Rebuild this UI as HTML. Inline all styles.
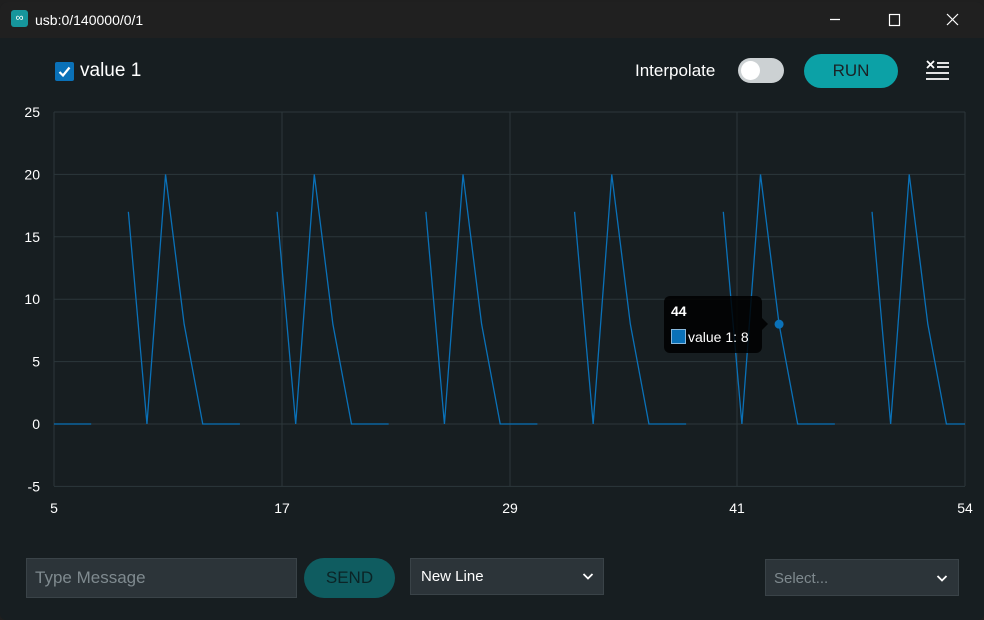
<!DOCTYPE html>
<html><head><meta charset="utf-8"><style>
*{margin:0;padding:0;box-sizing:border-box}
body{width:984px;height:620px;background:#1f1f1f;font-family:"Liberation Sans",sans-serif;overflow:hidden;position:relative}
.win{position:absolute;left:0;top:2px;width:984px;height:618px;background:#171e21;border-radius:8px 8px 6px 6px;overflow:hidden}
.title{height:36px;background:#202020;color:#fff;font-size:14px;position:relative}
.title .ic{position:absolute;left:11px;top:8px;width:17px;height:17px;background:#16969c;border-radius:3px;color:#fff;font-size:11px;text-align:center;line-height:16px}
.title .t{position:absolute;left:35px;top:10px}
.abs{position:absolute}
</style></head><body>
<div class="win">
<div class="title"><div class="ic">∞</div><div class="t">usb:0/140000/0/1</div>
<svg class="abs" style="left:820px;top:0" width="164" height="36" fill="none" stroke="#fff" stroke-width="1.2">
<line x1="10" y1="17.5" x2="20" y2="17.5"/><rect x="69.5" y="12.5" width="10" height="11"/>
<line x1="127" y1="12" x2="138" y2="23"/><line x1="138" y1="12" x2="127" y2="23"/></svg>
</div>
<div class="abs" style="left:55px;top:60px;width:19px;height:19px;background:#0a71b8;border-radius:2px"></div>
<svg class="abs" style="left:55px;top:60px" width="19" height="19"><path d="M4.5 10 L8 13.5 L14.5 5.5" stroke="#fff" stroke-width="2.2" fill="none"/></svg>
<div class="abs" style="left:80px;top:58px;color:#fff;font-size:19px">value 1</div>
<div class="abs" style="left:635px;top:59px;color:#fff;font-size:17px">Interpolate</div>
<div class="abs" style="left:738px;top:56px;width:46px;height:25px;border-radius:13px;background:#ccd1d3"></div>
<div class="abs" style="left:741px;top:59px;width:19px;height:19px;border-radius:50%;background:#fff"></div>
<div class="abs" style="left:804px;top:52px;width:94px;height:34px;border-radius:17px;background:#0ca1a6;color:#1a2226;font-size:17px;text-align:center;line-height:34px">RUN</div>
<svg class="abs" style="left:924px;top:57px" width="28" height="24" stroke="#fff" stroke-width="1.8" fill="none">
<line x1="3" y1="2" x2="10" y2="9"/><line x1="10" y1="2" x2="3" y2="9"/><line x1="13" y1="4" x2="25" y2="4"/><line x1="13" y1="8" x2="25" y2="8"/><line x1="2" y1="14" x2="25" y2="14"/><line x1="2" y1="20" x2="25" y2="20"/></svg>
<svg id="ch" class="abs" style="left:0;top:-2px" width="984" height="540" font-family="Liberation Sans" font-size="14" fill="#fff"></svg>
<div class="abs" style="left:26px;top:556px;width:271px;height:40px;background:#2c3439;border:1px solid #3a4348;color:#7f8a8f;font-size:17px;line-height:38px;padding-left:8px">Type Message</div>
<div class="abs" style="left:304px;top:556px;width:91px;height:40px;border-radius:20px;background:#0f5c60;color:#0b2426;font-size:17px;text-align:center;line-height:40px">SEND</div>
<div class="abs" style="left:410px;top:556px;width:194px;height:37px;background:#2c3439;border:1px solid #3a4348;color:#fff;font-size:15px;line-height:35px;padding-left:10px">New Line</div>
<svg class="abs" style="left:582px;top:570px" width="12" height="10"><path d="M1.5 2 L6 6.5 L10.5 2" stroke="#fff" stroke-width="1.8" fill="none"/></svg>
<div class="abs" style="left:765px;top:557px;width:194px;height:37px;background:#2c3439;border:1px solid #3a4348;color:#7f8a8f;font-size:15px;line-height:37px;padding-left:8px">Select...</div>
<svg class="abs" style="left:936px;top:572px" width="12" height="10"><path d="M1.5 2 L6 6.5 L10.5 2" stroke="#fff" stroke-width="1.8" fill="none"/></svg>
</div>
<script>
var s='',X=u=>54+(u-5)*18.592,Y=v=>424-v*12.48;
[25,20,15,10,5,0,-5].forEach(v=>{s+=`<line x1="54" x2="965" y1="${Y(v)}" y2="${Y(v)}" stroke="#2c373b"/><text x="40" y="${Y(v)+5}" text-anchor="end">${v}</text>`});
[[5,54],[17,282],[29,510],[41,737],[54,965]].forEach(a=>{s+=`<line y1="112" y2="486" x1="${a[1]}" x2="${a[1]}" stroke="#2c373b"/><text x="${a[1]}" y="513" text-anchor="middle">${a[0]}</text>`});
s+=`<polyline fill="none" stroke="#0a71b8" stroke-width="1.3" points="${X(5)},${Y(0)} ${X(7)},${Y(0)}"/>`;
var vals=[17,0,20,8,0,0,0];
for(var k=0;k<6;k++){var b=9+8*k,p=[];for(var i=0;i<7;i++){var u=b+i;if(u>54)break;p.push(X(u)+','+Y(vals[i]));}
s+=`<polyline fill="none" stroke="#0a71b8" stroke-width="1.3" points="${p.join(' ')}"/>`;}
s+=`<circle cx="${X(44)}" cy="${Y(8)}" r="4.5" fill="#0a71b8"/>`;
s+=`<rect x="664" y="296" width="98" height="57" rx="6" fill="#000" opacity=".85"/><path d="M762 318 L768 324 L762 330Z" fill="#000" opacity=".85"/>`;
s+=`<text x="671" y="316" font-weight="bold">44</text><rect x="671.5" y="329.5" width="14" height="14" fill="#0a71b8" stroke="#88b8dd"/><text x="688" y="342">value 1: 8</text>`;
document.getElementById('ch').innerHTML=s;
</script>
</body></html>
